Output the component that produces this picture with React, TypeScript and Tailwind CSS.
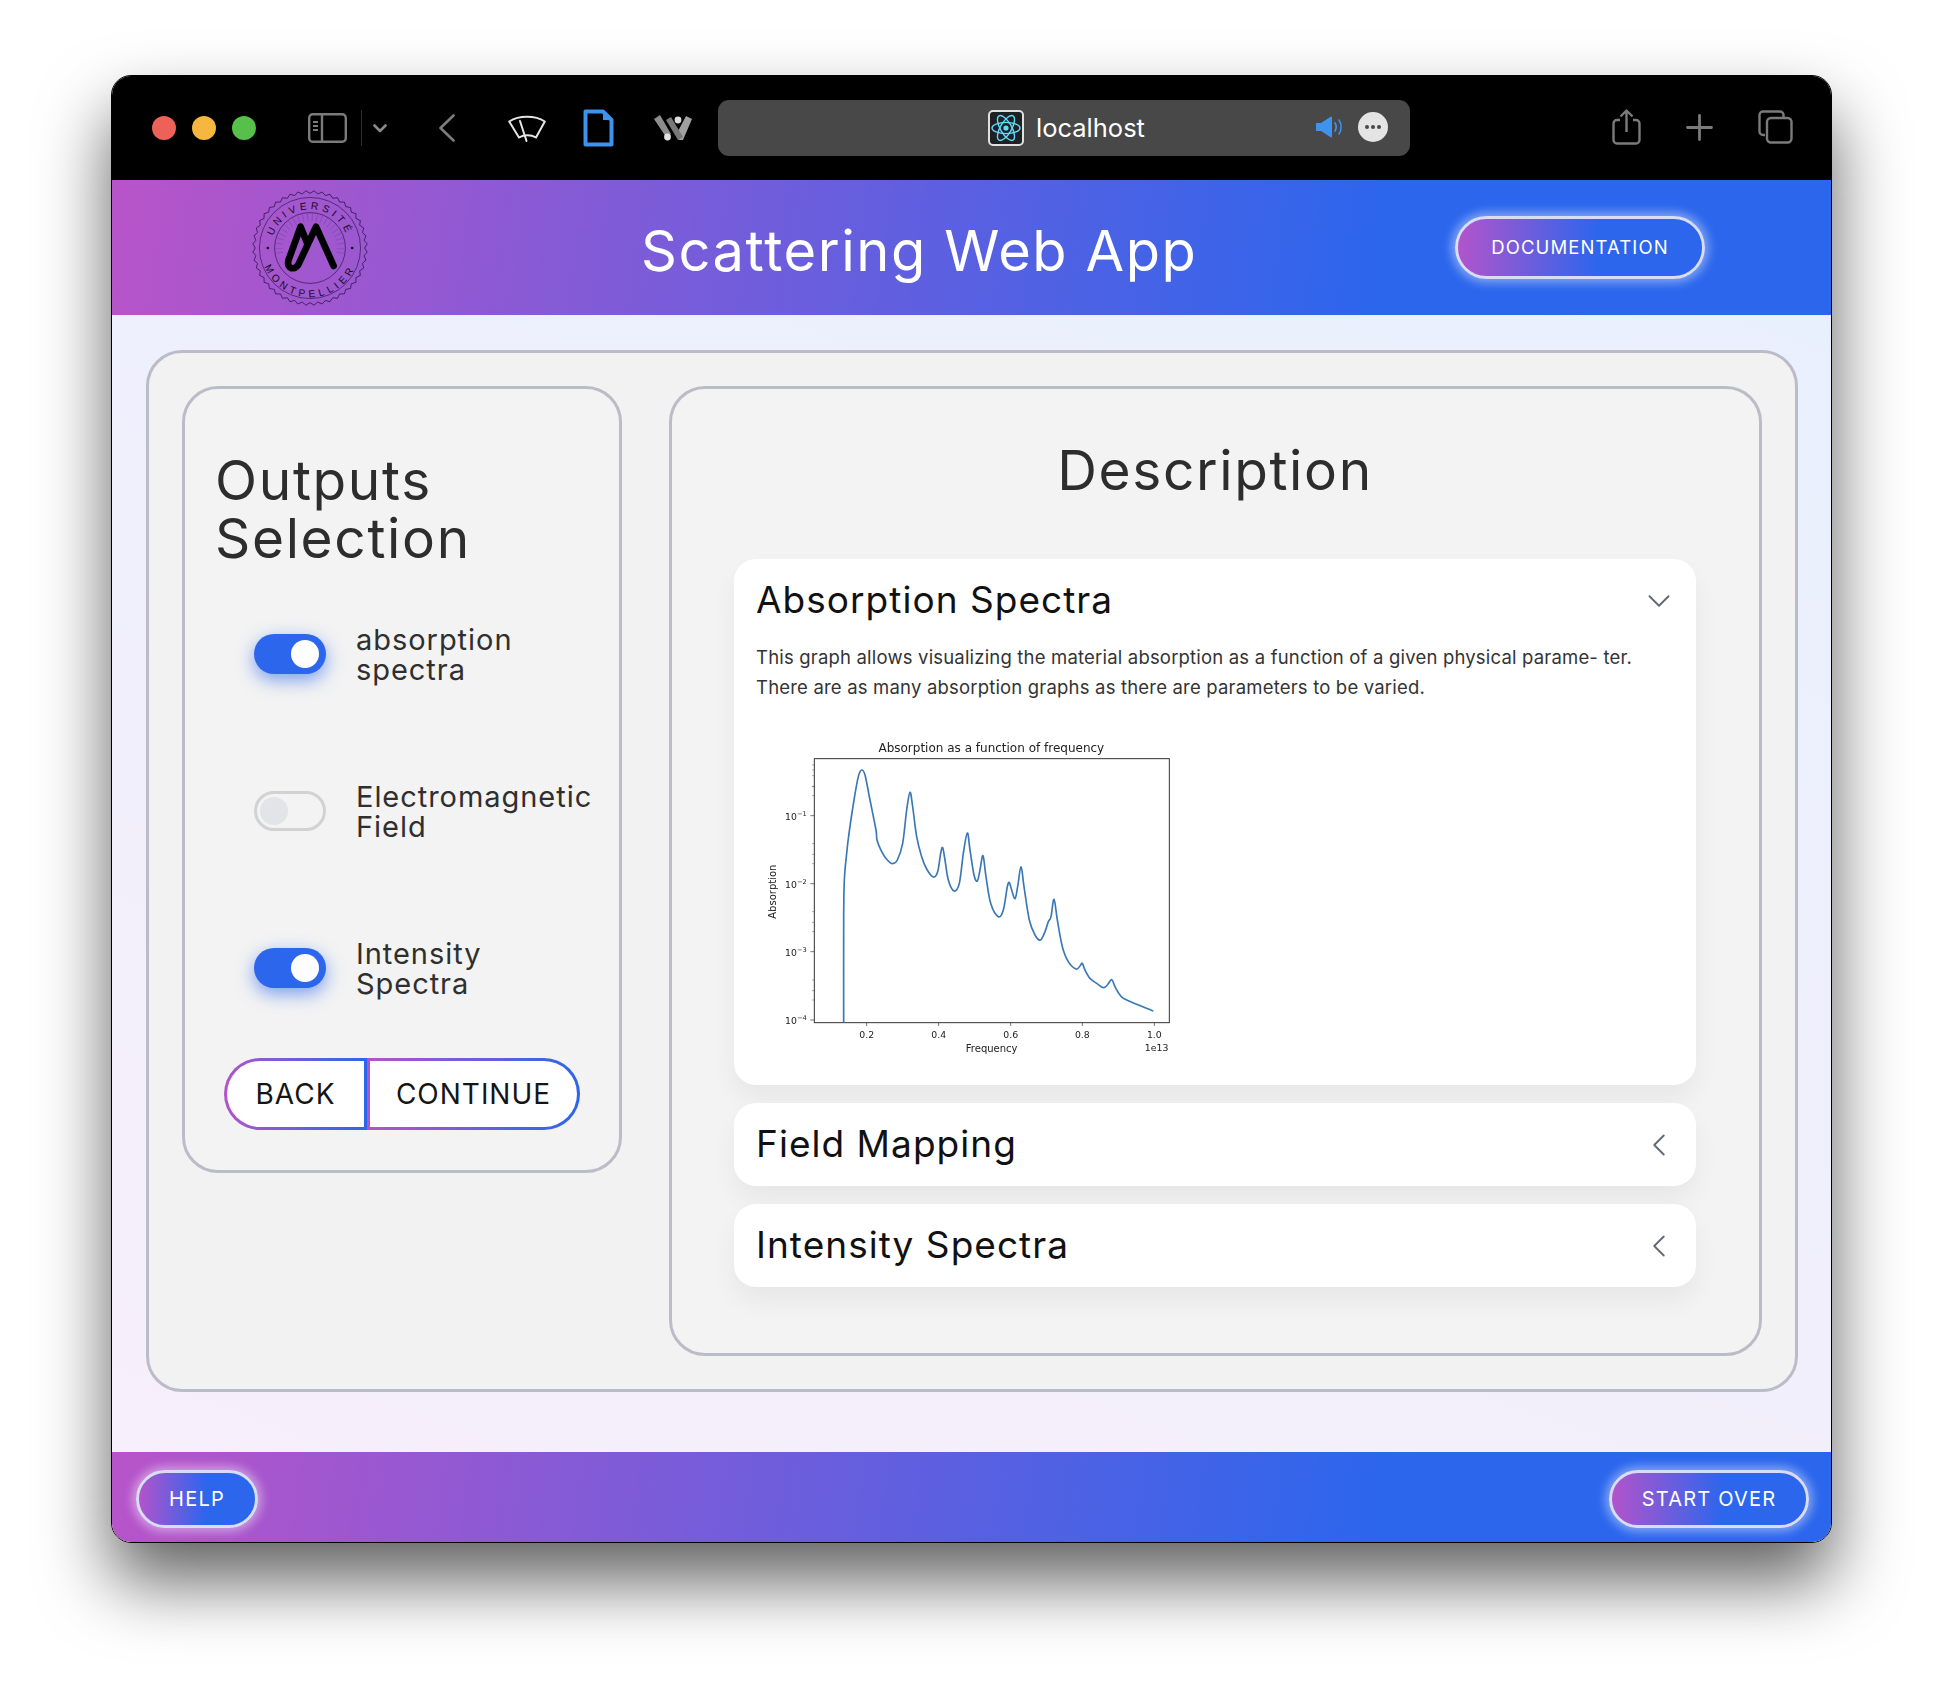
import { useMemo } from 'react';
import { ChevronDown, ChevronLeft } from 'lucide-react';

const sans = "font-['Inter','Liberation_Sans',sans-serif]";
const barGradient = 'bg-[linear-gradient(98deg,#b854c9_0%,#2b66ed_74%)]';

// traced from the plot, in 3x pixels
const curve: [number, number][] = [
  [281, 908], [281, 600], [283, 480], [290, 400], [297, 340], [312, 240], [325, 170], [335, 150], [345, 165], [360, 240],
  [378, 330], [381, 360], [395, 395], [412, 420], [428, 431], [442, 420], [458, 370], [470, 270], [480, 217], [488, 260],
  [500, 350], [515, 410], [530, 447], [550, 471], [563, 455], [572, 400], [578, 383], [585, 420], [595, 480], [612, 513],
  [628, 490], [640, 400], [652, 339], [660, 390], [672, 465], [682, 483], [690, 450], [699, 407], [708, 470], [722, 550],
  [745, 590], [760, 570], [772, 500], [778, 488], [785, 510], [795, 536], [803, 500], [813, 440], [822, 500], [838, 600],
  [855, 645], [871, 660], [885, 635], [895, 605], [903, 590], [912, 538], [922, 600], [937, 680], [955, 725], [978, 747],
  [990, 738], [997, 730], [1005, 750], [1020, 775], [1040, 790], [1060, 803], [1072, 795], [1085, 779], [1095, 800],
  [1110, 825], [1130, 840], [1210, 873],
];

function smooth(points: [number, number][]) {
  let d = `M${points[0][0]},${points[0][1]}`;
  for (let i = 0; i < points.length - 1; i++) {
    const p0 = points[Math.max(i - 1, 0)];
    const p1 = points[i];
    const p2 = points[i + 1];
    const p3 = points[Math.min(i + 2, points.length - 1)];
    const c1x = p1[0] + (p2[0] - p0[0]) / 6;
    const c1y = p1[1] + (p2[1] - p0[1]) / 6;
    const c2x = p2[0] - (p3[0] - p1[0]) / 6;
    const c2y = p2[1] - (p3[1] - p1[1]) / 6;
    d += ` C${c1x},${c1y} ${c2x},${c2y} ${p2[0]},${p2[1]}`;
  }
  return d;
}

function Chart() {
  const d = useMemo(() => smooth(curve), []);
  const xTicks = [[350, '0.2'], [566, '0.4'], [782, '0.6'], [997, '0.8'], [1213, '1.0']] as const;
  const yTicks = [[287, '−1'], [491, '−2'], [695, '−3'], [900, '−4']] as const;
  const font = "'DejaVu Sans', sans-serif";
  return (
    <svg viewBox="0 0 1320 1050" className="w-[440px] h-[350px] blur-[0.4px]" fontFamily={font} fill="#222">
      <text x="724" y="96" fontSize="36" textAnchor="middle">Absorption as a function of frequency</text>
      <rect x="193" y="116" width="1065" height="792" fill="none" stroke="#333" strokeWidth="3" />
      {xTicks.map(([x, label]) => (
        <g key={label}>
          <line x1={x} x2={x} y1="908" y2="918" stroke="#333" strokeWidth="2" />
          <text x={x} y="953" fontSize="28" textAnchor="middle">{label}</text>
        </g>
      ))}
      {yTicks.map(([y, exp]) => (
        <g key={exp}>
          <line x1="181" x2="193" y1={y} y2={y} stroke="#333" strokeWidth="2" />
          <text x="105" y={y + 12} fontSize="28">10<tspan fontSize="20" dy="-12">{exp}</tspan></text>
        </g>
      ))}
      {[227, 199, 167, 431, 403, 371, 635, 607, 575, 840, 812, 780, 200, 150, 135].map((y) => (
        <line key={y} x1="186" x2="193" y1={y} y2={y} stroke="#555" strokeWidth="1.5" />
      ))}
      <text x="725" y="995" fontSize="30" textAnchor="middle">Frequency</text>
      <text x="1255" y="993" fontSize="28" textAnchor="end">1e13</text>
      <text transform="translate(78 515) rotate(-90)" fontSize="30" textAnchor="middle">Absorption</text>
      <path d={d} fill="none" stroke="#3a78b5" strokeWidth="5" strokeLinejoin="round" />
    </svg>
  );
}

function Seal() {
  const teeth = useMemo(() => {
    let d = '';
    const n = 44;
    for (let i = 0; i <= n * 2; i++) {
      const a = (i / (n * 2)) * Math.PI * 2;
      const r = i % 2 ? 170 : 162;
      d += `${i ? 'L' : 'M'}${240 + r * Math.cos(a)},${235 + r * Math.sin(a)} `;
    }
    return d;
  }, []);
  const rays = Array.from({ length: 24 }, (_, i) => Math.PI * (0.95 + (i / 23) * 1.1));
  const stroke = '#2a1650';
  const font = "'Liberation Sans', sans-serif";
  return (
    <svg viewBox="68 63 344 344" className="w-[116px] h-[116px] shrink-0" fill="#160c2a">
      <path d={teeth} fill="none" stroke={stroke} strokeWidth="2.4" strokeLinejoin="round" />
      <circle cx="240" cy="235" r="150" fill="none" stroke={stroke} strokeWidth="2" />
      <circle cx="240" cy="235" r="105" fill="none" stroke={stroke} strokeWidth="2" />
      {rays.map((a) => (
        <line key={a} x1={240 + 80 * Math.cos(a)} y1={235 + 80 * Math.sin(a)} x2={240 + 102 * Math.cos(a)} y2={235 + 102 * Math.sin(a)}
          stroke={stroke} strokeWidth="1" opacity="0.55" />
      ))}
      <defs>
        <path id="sealTop" d="M129,205 A115,115 0 0 1 351,205" />
        <path id="sealBottom" d="M98,265 A145,145 0 0 0 382,265" />
      </defs>
      <text fontSize="30" fontFamily={font} letterSpacing="11" textAnchor="middle">
        <textPath href="#sealTop" startOffset="50%">UNIVERSITÉ</textPath>
      </text>
      <text fontSize="30" fontFamily={font} letterSpacing="12" textAnchor="middle">
        <textPath href="#sealBottom" startOffset="50%">MONTPELLIER</textPath>
      </text>
      <circle cx="115" cy="235" r="4" />
      <circle cx="365" cy="235" r="4" />
      <path d="M232,222 L212,172 L176,272 C170,300 196,300 205,285 L258,172 L310,288"
        fill="none" stroke="#000" strokeWidth="20" strokeLinecap="round" strokeLinejoin="round" />
    </svg>
  );
}

function GlowButton({ label, className }: { label: string; className: string }) {
  return (
    <button
      className={`${className} shrink-0 rounded-full border-[3px] border-[#d9dcf6] shadow-[0_0_10px_4px_rgba(255,255,255,0.4)] text-white tracking-[0.06em] bg-[linear-gradient(90deg,#b254cb_0%,#2b66ed_58%)] ${sans}`}
    >
      {label}
    </button>
  );
}

function OutputToggle({ on, label }: { on: boolean; label: [string, string] }) {
  return (
    <div className="flex items-center h-[60px] pl-[69px]">
      {on ? (
        <span className="flex items-center justify-end w-[72px] h-[40px] pr-[7px] rounded-full bg-[#2b66ed] shadow-[0_6px_18px_rgba(43,102,237,0.6)]">
          <span className="w-[28px] h-[28px] rounded-full bg-white" />
        </span>
      ) : (
        <span className="flex items-center w-[72px] h-[40px] pl-[3px] rounded-full border-[3px] border-[#d2d2d2] bg-[#f3f3f3]">
          <span className="w-[28px] h-[28px] rounded-full bg-[#e3e4e8]" />
        </span>
      )}
      <span className={`ml-[30px] pt-[2px] text-[29px] leading-[30px] text-[#2f2f2f] tracking-[0.033em] whitespace-nowrap ${sans}`}>
        {label[0]}<br />{label[1]}
      </span>
    </div>
  );
}

function AccordionRow({ title }: { title: string }) {
  return (
    <div className="flex items-center justify-between h-[83px] pl-[22px] pr-[18px] bg-white rounded-[22px] shadow-[0_14px_26px_rgba(0,0,0,0.05)]">
      <span className={`pb-[2px] text-[37px] text-[#111] tracking-[0.028em] ${sans}`}>{title}</span>
      <ChevronLeft className="w-[38px] h-[38px] text-[#626a75]" strokeWidth={1.2} />
    </div>
  );
}

function Toolbar() {
  return (
    <div className="flex items-center h-[104px] pl-[40px] pr-[38px] bg-black shrink-0">
      <div className="flex gap-[16px]">
        <span className="w-[24px] h-[24px] rounded-full bg-[#ed6158]" />
        <span className="w-[24px] h-[24px] rounded-full bg-[#f5b73f]" />
        <span className="w-[24px] h-[24px] rounded-full bg-[#56c04a]" />
      </div>
      {/* sidebar */}
      <svg viewBox="0 0 39 30" className="ml-[52px] w-[39px] h-[30px]" fill="none" stroke="#7b7b7b" strokeWidth="2.4">
        <rect x="1.2" y="1.2" width="36.6" height="27.6" rx="3.5" />
        <line x1="14" y1="1.2" x2="14" y2="28.8" />
        <path d="M5,9h5M5,13h5M5,17h5" strokeWidth="1.8" />
      </svg>
      <span className="ml-[14px] w-px h-[36px] bg-[#2c2c2c]" />
      <svg viewBox="0 0 14 9" className="ml-[11px] w-[14px] h-[9px]" fill="none" stroke="#8a8a8a" strokeWidth="2.6" strokeLinecap="round" strokeLinejoin="round">
        <path d="M1.5,1.5 L7,7 L12.5,1.5" />
      </svg>
      <svg viewBox="0 0 16 28" className="ml-[52px] w-[16px] h-[28px]" fill="none" stroke="#7c7c7c" strokeWidth="2.6" strokeLinecap="round" strokeLinejoin="round">
        <path d="M14.5,1.5 L1.5,14 L14.5,26.5" />
      </svg>
      {/* wiper */}
      <svg viewBox="0 0 38 27" className="ml-[53px] w-[38px] h-[27px]" fill="none" stroke="#e6e6e6" strokeWidth="2" strokeLinejoin="round">
        <path d="M1.2,6.5 C11,0.3 27,0.3 36.8,6.5 L28,22.5 C23,19.5 16,19.5 11,22.5 Z" />
        <path d="M12,6 L18.5,26" strokeLinecap="round" />
      </svg>
      {/* page */}
      <svg viewBox="0 0 31 38" className="ml-[37px] w-[31px] h-[38px]" fill="none">
        <path d="M2.5,2.5 H20 L28.5,11 V35.5 H2.5 Z" stroke="#3d94f0" strokeWidth="4" strokeLinejoin="round" />
        <path d="M20,2.5 V11 H28.5" fill="#3d94f0" />
      </svg>
      {/* W */}
      <svg viewBox="0 0 38 26" className="ml-[40px] w-[38px] h-[26px]">
        <path d="M0,4 L6,0 L17,19 L12,22 Z" fill="#8d8d8d" />
        <path d="M38,4 L32,1 L22,20 L25,25 L29,25 Z" fill="#a0a0a0" />
        <path d="M12,5 L17,2 L29,22 L24,25 Z" fill="#787878" />
        <circle cx="24" cy="5" r="3.4" fill="#dcdcdc" />
        <circle cx="13.5" cy="22" r="3.4" fill="#e4e4e4" />
      </svg>
      {/* address bar */}
      <div className="relative ml-[26px] flex items-center w-[692px] h-[56px] pl-[270px] rounded-[11px] bg-[#484848]">
        <svg viewBox="0 0 36 36" className="w-[36px] h-[36px]">
          <rect x="1" y="1" width="34" height="34" rx="4" fill="#1e2124" stroke="#e0e0e0" strokeWidth="2" />
          <g fill="none" stroke="#61dafb" strokeWidth="1.4">
            <ellipse cx="18" cy="18" rx="14" ry="5.6" />
            <ellipse cx="18" cy="18" rx="14" ry="5.6" transform="rotate(60 18 18)" />
            <ellipse cx="18" cy="18" rx="14" ry="5.6" transform="rotate(120 18 18)" />
          </g>
          <circle cx="18" cy="18" r="2.6" fill="#61dafb" />
        </svg>
        <span className="ml-[12px] text-[25.5px] leading-none text-white font-['Inter',sans-serif]">localhost</span>
        <div className="absolute right-[22px] top-[12px] flex items-center gap-[16px]">
          <svg viewBox="0 0 26 22" className="w-[26px] h-[22px]" fill="none">
            <path d="M0,7 H5 L15,0.5 Q16,0 16,2 V20 Q16,22 15,21.5 L5,15 H0 Z" fill="#3f92ee" />
            <path d="M19,7 C20.5,9.5 20.5,12.5 19,15" stroke="#3f92ee" strokeWidth="1.7" strokeLinecap="round" />
            <path d="M23,4 C25.8,8 25.8,14 23,18" stroke="#3f92ee" strokeWidth="1.5" strokeLinecap="round" />
          </svg>
          <span className="flex items-center justify-center gap-[2px] w-[30px] h-[30px] rounded-full bg-[#e4e4e4]">
            <span className="w-[4px] h-[4px] rounded-full bg-[#484848]" />
            <span className="w-[4px] h-[4px] rounded-full bg-[#484848]" />
            <span className="w-[4px] h-[4px] rounded-full bg-[#484848]" />
          </span>
        </div>
      </div>
      <div className="ml-auto flex items-center gap-[45px] pb-[2px]">
        <svg viewBox="0 0 29 36" className="w-[29px] h-[36px]" fill="none" stroke="#7b7b7b" strokeWidth="2.4" strokeLinejoin="round">
          <path d="M8,11 H5 A3.5,3.5 0 0 0 1.5,14.5 V31 A3.5,3.5 0 0 0 5,34.5 H24 A3.5,3.5 0 0 0 27.5,31 V14.5 A3.5,3.5 0 0 0 24,11 H21" />
          <path d="M14.5,23 V1.5 M8.5,7.5 L14.5,1.5 L20.5,7.5" />
        </svg>
        <svg viewBox="0 0 27 27" className="w-[27px] h-[27px]" fill="none" stroke="#7b7b7b" strokeWidth="2.8" strokeLinecap="round">
          <path d="M13.5,1.5 V25.5 M1.5,13.5 H25.5" />
        </svg>
        <svg viewBox="0 0 35 34" className="w-[35px] h-[34px]" fill="none" stroke="#7b7b7b" strokeWidth="2.4">
          <path d="M7,25 H5 A3.5,3.5 0 0 1 1.5,21.5 V5 A3.5,3.5 0 0 1 5,1.5 H22 A3.5,3.5 0 0 1 25.5,5 V8" />
          <rect x="9" y="8" width="24.5" height="24.5" rx="4" />
        </svg>
      </div>
    </div>
  );
}

export default function App() {
  return (
    <div className="min-h-[1690px] pt-[75px] pl-[111px] bg-white">
      <div className="flex flex-col w-[1721px] h-[1468px] overflow-hidden rounded-[20px] border border-black shadow-[0_38px_70px_rgba(0,0,0,0.62)]">
        <Toolbar />

        <header className={`flex items-center h-[135px] shrink-0 pl-[140px] pr-[126px] ${barGradient}`}>
          <Seal />
          <h1 className={`ml-[273px] pt-[7px] text-[56px] text-white tracking-[0.028em] whitespace-nowrap ${sans}`}>Scattering Web App</h1>
          <GlowButton label="DOCUMENTATION" className="ml-auto w-[250px] h-[63px] text-[18.5px]" />
        </header>

        <main className="flex-1 pl-[34px] pr-[33px] pt-[35px] bg-[linear-gradient(20deg,#f7effb,#e9f0fd)]">
          <div className="flex gap-[47px] h-[1042px] pl-[33px] pt-[33px] rounded-[36px] border-[3px] border-[#bbbcc8] bg-[#f2f2f2]">
            <section className="flex flex-col w-[440px] h-[787px] rounded-[36px] border-[3px] border-[#bbbcc8] bg-[#f3f3f3]">
              <h2 className={`pl-[30px] pt-[62px] text-[55px] leading-[58px] text-[#2d2d2d] tracking-[0.03em] ${sans}`}>
                Outputs<br />Selection
              </h2>
              <div className="flex flex-col gap-[97px] mt-[57px]">
                <OutputToggle on label={['absorption', 'spectra']} />
                <OutputToggle on={false} label={['Electromagnetic', 'Field']} />
                <OutputToggle on label={['Intensity', 'Spectra']} />
              </div>
              <div className={`flex mt-[60px] ml-[39px] text-[28px] text-[#151515] tracking-[0.035em] ${sans}`}>
                <button className="w-[143px] h-[72px] rounded-l-full border-[3px] border-transparent [background-origin:border-box] [background-clip:padding-box,border-box] bg-[linear-gradient(#fff,#fff),linear-gradient(90deg,#b254cb,#2b66ed)]">BACK</button>
                <button className="w-[213px] h-[72px] rounded-r-full border-[3px] border-transparent [background-origin:border-box] [background-clip:padding-box,border-box] bg-[linear-gradient(#fff,#fff),linear-gradient(90deg,#b254cb,#2b66ed)]">CONTINUE</button>
              </div>
            </section>

            <section className="w-[1093px] h-[970px] pl-[62px] pr-[63px] rounded-[36px] border-[3px] border-[#bbbcc8] bg-[#f3f3f3]">
              <h2 className={`pt-[48px] text-center text-[55px] leading-[66px] text-[#2d2d2d] tracking-[0.03em] ${sans}`}>Description</h2>
              <div className="flex flex-col gap-[18px] mt-[56px]">
                <div className="h-[526px] pl-[22px] pr-[18px] bg-white rounded-[22px] shadow-[0_14px_26px_rgba(0,0,0,0.05)]">
                  <div className="flex items-center justify-between h-[83px]">
                    <span className={`pb-[2px] text-[37px] text-[#111] tracking-[0.028em] ${sans}`}>Absorption Spectra</span>
                    <ChevronDown className="w-[38px] h-[38px] text-[#626a75]" strokeWidth={1.2} />
                  </div>
                  <p className={`text-[18.5px] leading-[30px] text-[#333] tracking-[0.01em] ${sans}`}>
                    This graph allows visualizing the material absorption as a function of a given physical parame- ter.<br />
                    There are as many absorption graphs as there are parameters to be varied.
                  </p>
                  <div className="mt-[18px] -ml-[6px]">
                    <Chart />
                  </div>
                </div>
                <AccordionRow title="Field Mapping" />
                <AccordionRow title="Intensity Spectra" />
              </div>
            </section>
          </div>
        </main>

        <footer className={`flex items-start justify-between h-[90px] shrink-0 pt-[18px] pl-[24px] pr-[22px] ${barGradient}`}>
          <GlowButton label="HELP" className="w-[122px] h-[58px] text-[20px]" />
          <GlowButton label="START OVER" className="w-[200px] h-[58px] text-[20px]" />
        </footer>
      </div>
    </div>
  );
}
